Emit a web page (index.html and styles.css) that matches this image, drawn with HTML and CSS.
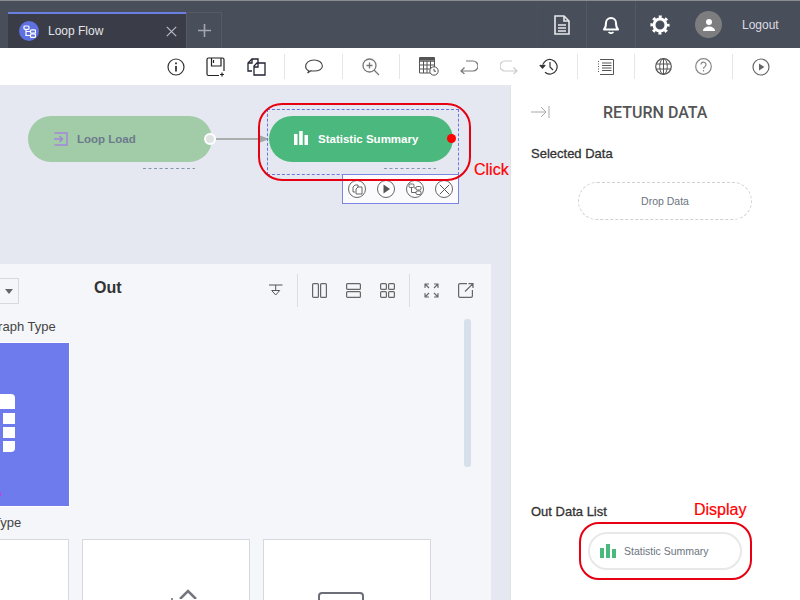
FILE: index.html
```html
<!DOCTYPE html>
<html lang="en">
<head>
<meta charset="utf-8">
<title>Loop Flow</title>
<link rel="stylesheet" href="styles.css">
</head>
<body>
<div class="app">
  <header class="topbar">
    <div class="tabs">
      <div class="tab">
        <span class="tab-logo">
          <svg width="13" height="13" viewBox="0 0 13 13" fill="none" stroke="#fff" stroke-width="1.2"><rect x="1" y="1" width="5" height="3.4" rx="1"/><rect x="7.5" y="4.8" width="5" height="3.4" rx="1"/><rect x="7.5" y="9" width="5" height="3.4" rx="1"/><path d="M3 4.500V10.500H7.500M3 6.500H7.500"/></svg>
        </span>
        <span class="tab-name">Loop Flow</span>
        <svg class="tab-close" width="11" height="11" viewBox="0 0 11 11" stroke="#b9bcc4" stroke-width="1.2"><path d="M.8.8l9.4 9.4M10.2.8L.8 10.2"/></svg>
      </div>
      <div class="tab-add">
        <svg width="13" height="13" viewBox="0 0 13 13" stroke="#a3a6ae" stroke-width="1.6"><path d="M6.5 0v13M0 6.5h13"/></svg>
      </div>
    </div>
    <div class="top-actions">
      <div class="top-btn">
        <svg width="18" height="20" viewBox="0 0 18 20" fill="none" stroke="#e8e8ec" stroke-width="1.6"><path d="M2 1h9l5 5v13H2z"/><path d="M11 1v5h5"/><path d="M5 10h8M5 13h8M5 16h8"/></svg>
      </div>
      <div class="top-btn">
        <svg width="16" height="19" viewBox="0 0 16 19" fill="none" stroke="#fff" stroke-width="2"><path d="M1 14.500c1.500-1.500 2-3 2-6.500a5 5 0 0 1 10 0c0 3.500.5 5 2 6.500z" stroke-linejoin="round"/><path d="M5.500 17.200c1.300 1 3.700 1 5 0" stroke-width="1.700"/></svg>
      </div>
      <div class="top-btn">
        <svg width="20" height="20" viewBox="0 0 20 20" fill="none" stroke="#fff"><circle cx="10" cy="10" r="6" stroke-width="3"/><circle cx="10" cy="10" r="8.200" stroke-width="2.800" stroke-dasharray="3 3.440" stroke-dashoffset="1.500"/></svg>
      </div>
      <span class="avatar">
        <svg width="14" height="14" viewBox="0 0 14 14" fill="#fff"><circle cx="7" cy="4" r="3"/><path d="M1 13c0-3 3-4.500 6-4.500s6 1.500 6 4.500z"/></svg>
      </span>
      <span class="logout">Logout</span>
    </div>
  </header>

  <nav class="toolbar">
    <span class="tool"><svg width="18" height="18" viewBox="0 0 18 18" fill="none" stroke="#333" stroke-width="1.2"><circle cx="9" cy="9" r="8"/><path d="M9 8v5.500" stroke-width="1.800"/><path d="M9 4.500v1.800" stroke-width="1.800"/></svg></span>
    <span class="tool"><svg width="20" height="20" viewBox="0 0 20 20" fill="none" stroke="#222" stroke-width="1.200"><path d="M13 18.500H2.500a1.500 1.500 0 0 1-1.500-1.500V2.500A1.500 1.500 0 0 1 2.500 1h14A1.500 1.500 0 0 1 18 2.500V14"/><path d="M5.500 1v8H15V1M7.500 3v3"/><path d="M16 15.500v4M14 17.500h4"/></svg></span>
    <span class="tool"><svg width="19" height="18" viewBox="0 0 19 18" fill="none" stroke="#223" stroke-width="1.3"><path d="M5 13H1V5l4-4h6v4"/><path d="M1 5h4V1"/><path d="M7 17V8l3-3h8v12z"/><path d="M7 9h4V5"/></svg></span>
    <i class="sep"></i>
    <span class="tool"><svg width="18" height="15" viewBox="0 0 18 15" fill="none" stroke="#444" stroke-width="1.100"><path d="M4 12c-2-1-3.400-2.400-3.400-4.500C.6 4 4 1 9 1s8.400 2.800 8.400 6S14 12 9 12c-1 0-2 0-3-.3L2.500 14z"/></svg></span>
    <i class="sep"></i>
    <span class="tool"><svg width="18" height="18" viewBox="0 0 18 18" fill="none" stroke="#777" stroke-width="1.300"><circle cx="7.500" cy="7.500" r="6.500"/><path d="M12 12l5 5M7.500 4.500v6M4.500 7.500h6"/></svg></span>
    <i class="sep"></i>
    <span class="tool"><svg width="20" height="19" viewBox="0 0 20 19" fill="none" stroke="#555" stroke-width="1"><path d="M.5.500h15v3.500H.5zM.5 4h15v12H.5zM.5 8h15M.5 12h15M4.500 4v12M8 4v12M11.500 4v12"/><path d="M.5 1.500h15M.5 2.500h15"/><circle cx="15" cy="14" r="4.200" fill="#fff"/><path d="M15 11.800v2.400h2"/></svg></span>
    <span class="tool"><svg width="18" height="14" viewBox="0 0 18 14" fill="none" stroke="#777" stroke-width="1.200"><path d="M6 1h7a5 5 0 0 1 0 10H1M4.500 7.500L1 11l3.500 3"/></svg></span>
    <span class="tool"><svg width="18" height="14" viewBox="0 0 18 14" fill="none" stroke="#ccc" stroke-width="1.200"><path d="M12 1H5a5 5 0 0 0 0 10h12M13.500 7.500L17 11l-3.500 3"/></svg></span>
    <span class="tool"><svg width="19" height="17" viewBox="0 0 19 17" fill="none" stroke="#333" stroke-width="1.200"><path d="M3.500 8.500a7.300 7.300 0 1 1 2.500 5.800"/><path d="M.8 7l2.700 3 2.700-3" fill="#333"/><path d="M11 4v5l3 3"/></svg></span>
    <i class="sep"></i>
    <span class="tool"><svg width="16" height="16" viewBox="0 0 16 16" fill="none" stroke="#555" stroke-width="1"><path d="M2 .5h13.500v15H2" /><path d="M4 4h9.500M4 6.500h9.500M4 9h9.500M4 11.500h9.500"/><path d="M.5 2v12" stroke-dasharray="1 1.500"/></svg></span>
    <i class="sep"></i>
    <span class="tool"><svg width="17" height="17" viewBox="0 0 17 17" fill="none" stroke="#555" stroke-width="1"><circle cx="8.500" cy="8.500" r="7.800" stroke-width="1.200"/><ellipse cx="8.500" cy="8.500" rx="3.800" ry="7.800"/><path d="M8.500.7v15.600M1 6h15M1 11h15"/></svg></span>
    <span class="tool"><svg width="17" height="17" viewBox="0 0 17 17" fill="none" stroke="#888" stroke-width="1.200"><circle cx="8.500" cy="8.500" r="7.800"/><path d="M6 6.500a2.500 2.500 0 1 1 3.800 2.200c-.9.500-1.300 1-1.300 2"/><path d="M8.500 12v1.500"/></svg></span>
    <i class="sep"></i>
    <span class="tool"><svg width="18" height="18" viewBox="0 0 18 18" fill="none" stroke="#666" stroke-width="1.200"><circle cx="9" cy="9" r="8"/><path d="M7 5.500l5.500 3.500L7 12.500z" fill="#666" stroke="none"/></svg></span>
  </nav>

  <main class="workspace">
    <section class="canvas">
      <div class="node node-load">
        <svg class="node-icon" width="15" height="14" viewBox="0 0 15 14" fill="none" stroke="#a286dc" stroke-width="1.400"><path d="M1.500 1H14v12H1.500M1 7h8.500M6.500 4l3 3-3 3"/></svg>
        <span>Loop Load</span>
      </div>
      <span class="port"></span>
      <svg class="wire" width="56" height="12" viewBox="0 0 56 12"><path d="M0 6h43" stroke="#949b9a" stroke-width="1.500"/><path d="M43 2l10 4-10 4z" fill="#a0a5a5"/></svg>
      <svg class="dash dash-a" width="52" height="3" viewBox="0 0 52 3"><path d="M0 1.500h52" stroke="#8a96b0" stroke-dasharray="3 2.500"/></svg>

      <div class="node node-stat">
        <svg class="node-icon node-icon-stat" width="14" height="14" viewBox="0 0 14 14" fill="#fff"><path d="M0 3h3.500v11H0zM5.200 0h3.500v14H5.200zM10.500 4H14v10h-3.500z"/></svg>
        <span>Statistic Summary</span>
      </div>
      <span class="port-red"></span>
      <svg class="dash dash-b" width="52" height="3" viewBox="0 0 52 3"><path d="M0 1.500h52" stroke="#8a96b0" stroke-dasharray="3 2.500"/></svg>
      <div class="selection"></div>
      <div class="mini-tools">
        <span class="mini"><svg width="11" height="11" viewBox="0 0 11 11" fill="none" stroke="#555" stroke-width=".9"><path d="M3 8H1V3l2-2h3v2M4 10V5l2-2h4v7z"/></svg></span>
        <span class="mini"><svg width="10" height="10" viewBox="0 0 10 10" fill="#555"><path d="M2.500 .5L9 5l-6.500 4.500z"/></svg></span>
        <span class="mini"><svg width="14" height="12" viewBox="0 0 14 12" fill="none" stroke="#555" stroke-width=".9"><rect x="1" y="1" width="5" height="3.500" rx="1.200"/><rect x="8" y="3.500" width="5" height="3.500" rx="1.200"/><rect x="8" y="8" width="5" height="3.500" rx="1.200"/><path d="M3.500 4.500v5H8M6 5h2"/></svg></span>
        <span class="mini"><svg width="11" height="11" viewBox="0 0 11 11" stroke="#555"><path d="M.8.8l9.400 9.400M10.200.8L.8 10.200"/></svg></span>
      </div>
      <div class="mark mark-click"></div>
      <span class="note note-click">Click</span>

      <div class="out-panel">
        <div class="out-head">
          <div class="select"><i class="caret"></i></div>
          <h2 class="out-title">Out</h2>
          <div class="out-tools">
            <svg width="14" height="13" viewBox="0 0 14 13" fill="none" stroke="#555" stroke-width="1"><path d="M0 1h13.500M6.700 1v5M2.700 6.500h8l-4 4.500z"/></svg>
            <i class="ot-sep"></i>
            <svg width="15" height="15" viewBox="0 0 15 15" fill="none" stroke="#666" stroke-width="1.200"><rect x=".6" y=".6" width="5.800" height="13.800" rx="1"/><rect x="8.600" y=".6" width="5.800" height="13.800" rx="1"/></svg>
            <svg width="15" height="15" viewBox="0 0 15 15" fill="none" stroke="#666" stroke-width="1.200"><rect x=".6" y=".6" width="13.800" height="5.800" rx="1"/><rect x=".6" y="8.600" width="13.800" height="5.800" rx="1"/></svg>
            <svg width="15" height="15" viewBox="0 0 15 15" fill="none" stroke="#666" stroke-width="1.200"><rect x=".6" y=".6" width="5.800" height="5.800" rx="1"/><rect x="8.600" y=".6" width="5.800" height="5.800" rx="1"/><rect x=".6" y="8.600" width="5.800" height="5.800" rx="1"/><rect x="8.600" y="8.600" width="5.800" height="5.800" rx="1"/></svg>
            <i class="ot-sep"></i>
            <svg width="15" height="15" viewBox="0 0 15 15" fill="none" stroke="#666" stroke-width="1.100"><path d="M1 5V1h4M1 1l4 4M10 1h4v4M14 1l-4 4M1 10v4h4M1 14l4-4M10 14h4v-4M14 14l-4-4"/></svg>
            <svg width="16" height="15" viewBox="0 0 16 15" fill="none" stroke="#666" stroke-width="1.200"><path d="M9 .6H2a1.400 1.400 0 0 0-1.400 1.400v11A1.400 1.400 0 0 0 2 14.400h11a1.400 1.400 0 0 0 1.400-1.400V7M7 8.500L15 .6M10.500.6H15v4.500"/></svg>
          </div>
        </div>
        <div class="label label-graph">Graph Type</div>
        <div class="graph-card">
          <div class="table-glyph">
            <i class="tg-head"></i><i class="tg-cell"></i><i class="tg-cell"></i><i class="tg-cell tg-last"></i>
          </div>
          <i class="graph-dot"></i>
        </div>
        <div class="label label-type">Type</div>
        <div class="type-row">
          <div class="type-card"></div>
          <div class="type-card">
            <i class="glyph-tick"></i>
            <svg class="glyph-up" width="30" height="10" viewBox="0 0 30 10" fill="none" stroke="#75777f" stroke-width="2.600"><path d="M7 10L15 2l8 8"/></svg>
          </div>
          <div class="type-card">
            <div class="glyph-box"></div>
          </div>
        </div>
        <div class="scroll-thumb"></div>
      </div>
    </section>

    <aside class="side">
      <div class="side-head">
        <svg width="19" height="12" viewBox="0 0 19 12" fill="none" stroke="#aaa" stroke-width="1"><path d="M0 6h15M10 1l5 5-5 5M18 0v12"/></svg>
        <h1 class="side-title">RETURN DATA</h1>
      </div>
      <div class="side-label">Selected Data</div>
      <div class="drop">Drop Data</div>
      <div class="out-list">
        <div class="side-label">Out Data List</div>
        <div class="pill">
          <svg width="16" height="14" viewBox="0 0 16 14" fill="#4bb87e"><path d="M0 4h4v10H0zM6 0h4v14H6zM12 5h4v9h-4z"/></svg>
          <span>Statistic Summary</span>
        </div>
        <span class="note note-display">Display</span>
        <div class="mark mark-display"></div>
      </div>
    </aside>
  </main>
</div>
</body>
</html>
```
FILE: styles.css
```css
* { box-sizing: border-box; }
html, body { margin: 0; height: 100%; overflow: hidden; }
body { font-family: "Liberation Sans", Arial, sans-serif; font-size: 12px; color: #333; }
.app { width: 800px; height: 600px; display: flex; flex-direction: column; overflow: hidden; }

.topbar { height: 48px; flex: none; background: #494e5b; border-top: 1px solid #8a8c92; display: flex; justify-content: space-between; padding-left: 8px; }
.tabs { display: flex; align-self: flex-end; height: 36px; }
.tab { width: 178px; background: #3a3d47; border-top: 2px solid #6a7fe0; display: flex; align-items: center; padding: 0 8px 0 11px; }
.tab-logo { width: 20px; height: 20px; border-radius: 50%; background: #5f71e0; display: flex; align-items: center; justify-content: center; }
.tab-name { margin-left: 9px; font-size: 12px; color: #e4e5ea; flex: 1; }
.tab-close { margin-right: 1px; }
.tab-add { width: 36px; border: 1px solid #555a66; border-bottom: 0; display: flex; align-items: center; justify-content: center; }
.top-actions { display: flex; align-items: center; }
.top-btn { width: 49px; height: 47px; display: flex; align-items: center; justify-content: center; border-left: 1px solid #52566350; }
.top-btn + .top-btn { border-left-color: #545864; }
.avatar { width: 27px; height: 27px; border-radius: 50%; background: #7d7d80; display: flex; align-items: center; justify-content: center; margin-left: 11px; }
.logout { font-size: 12px; color: #dcdde2; margin: 0 22px 0 20px; width: 36px; white-space: nowrap; }

.toolbar { height: 37px; flex: none; background: #fff; display: flex; align-items: center; padding-left: 156px; }
.tool { width: 40px; display: flex; justify-content: center; align-items: center; }
.sep { width: 1px; height: 25px; margin: 0 8.25px; background: #e4e6ea; }

.workspace { flex: 1; display: flex; min-height: 0; }
.canvas { position: relative; width: 510px; background: #e5e8f0; overflow: hidden; padding-top: 179px; }

.node { position: absolute; top: 31px; width: 184px; height: 46px; border-radius: 23px; display: flex; align-items: center; font-weight: 700; font-size: 11.5px; padding-left: 25px; }
.node-load { left: 28px; background: #a2cba8; color: #6c7a8c; }
.node-stat { left: 269px; background: #4bb87e; color: #fff; }
.node-icon { margin-right: 9px; flex: none; }
.node-icon-stat { margin-top: -3px; margin-right: 10px; }
.port { position: absolute; left: 204px; top: 48px; width: 12px; height: 12px; border-radius: 50%; background: #dfe4e2; border: 2px solid #fff; }
.port-red { position: absolute; left: 447px; top: 49px; width: 9px; height: 9px; border-radius: 50%; background: #f00; }
.wire { position: absolute; left: 216px; top: 48px; }
.dash { position: absolute; top: 82px; }
.dash-a { left: 143px; }
.dash-b { left: 384px; }
.selection { position: absolute; left: 267px; top: 24px; width: 192px; height: 66px; border: 1px dashed #6a74e0; }
.mini-tools { position: absolute; left: 342px; top: 89px; width: 117px; height: 30px; background: #fbfbfd; border: 1px solid #7a86e4; display: flex; align-items: center; justify-content: space-between; padding: 0 5px; }
.mini { width: 18px; height: 18px; border-radius: 50%; border: 1px solid #666; background: #fff; display: flex; align-items: center; justify-content: center; }
.mark { position: absolute; border: 2px solid #e60012; }
.mark-click { left: 258px; top: 18px; width: 213px; height: 78px; border-radius: 24px; }
.note { position: absolute; color: #f00; font-size: 16px; -webkit-text-stroke: .2px #f00; }
.note-click { left: 474px; top: 76px; }

.out-panel { position: relative; margin-left: -130px; width: 621px; height: 336px; background: #f4f6f9; }
.out-head { display: flex; height: 58px; align-items: flex-start; padding-top: 14px; }
.select { width: 149px; height: 26px; border: 1px solid #d8d9dc; background: #f4f6f9; position: relative; }
.caret { position: absolute; right: 5px; top: 10px; border: 4px solid transparent; border-top: 5px solid #666; border-bottom: 0; }
.out-title { margin: 0 0 0 75px; font-size: 16px; font-weight: 700; color: #333; line-height: 20px; width: 27px; }
.out-tools { display: flex; align-items: center; margin-left: 148px; height: 25px; gap: 19px; }
.ot-sep { width: 1px; height: 33px; background: #d9dde6; margin: 0 -5px; flex: none; }
.label { font-size: 13px; color: #444; line-height: 16px; }
.label-graph { padding-left: 118px; margin-top: -3px; }
.graph-card { width: 200px; height: 165px; margin-top: 7px; background: #6d7bed; border: 1px solid #fff; border-left: 0; position: relative; }
.table-glyph { position: absolute; left: 0; top: 51px; width: 145px; display: flex; flex-direction: column; align-items: flex-end; gap: 3px; }
.tg-head { display: block; width: 30px; height: 16px; background: #fff; border-bottom: 1px solid #6d7bed; border-radius: 0 4px 0 0; }
.tg-cell { display: block; width: 12px; height: 11px; background: #fff; }
.tg-last { border-radius: 0 0 4px 0; }
.graph-dot { position: absolute; left: 130px; top: 149px; width: 1px; height: 4px; background: #c83fd8; }
.label-type { padding-left: 123px; margin-top: 8px; }
.type-row { display: flex; gap: 13px; margin-top: 8px; padding-left: 31px; }
.type-card { width: 168px; height: 120px; background: #fff; border: 1px solid #d6d7df; flex: none; position: relative; }
.glyph-up { position: absolute; left: 90px; top: 49px; }
.glyph-tick { position: absolute; left: 88px; top: 58px; width: 2px; height: 2px; background: #8a8c94; }
.glyph-box { position: absolute; left: 54px; top: 52px; width: 46px; height: 30px; border: 2px solid #6d6f78; border-radius: 4px; }
.scroll-thumb { position: absolute; left: 594px; top: 55px; width: 7px; height: 148px; border-radius: 3px; background: #d5e0ea; }

.side { width: 290px; flex: none; background: #fff; border-left: 1px solid #e3e3e3; display: flex; flex-direction: column; padding-left: 20px; position: relative; }
.side-head { display: flex; align-items: center; height: 54px; }
.side-title { margin: 0 0 0 53px; font-family: Roboto, "Liberation Sans", sans-serif; font-size: 16px; font-weight: 500; color: #555; }
.side-label { font-size: 13px; color: #333; -webkit-text-stroke: .3px #333; line-height: 16px; margin-top: 7px; }
.drop { width: 174px; height: 38px; margin: 20px 0 0 47px; border: 1px dashed #d0d0d0; border-radius: 19px; display: flex; align-items: center; justify-content: center; font-size: 10.5px; color: #6b7480; }
.out-list { margin-top: auto; position: relative; height: 102px; }
.out-list .side-label { margin-top: 6px; }
.pill { width: 154px; height: 38px; margin: 12px 0 0 57px; border: 2px solid #e8e8e8; border-radius: 19px; display: flex; align-items: center; padding-left: 10px; gap: 8px; font-size: 10.5px; color: #6b7480; }
.mark-display { left: 48px; top: 24px; width: 173px; height: 58px; border-radius: 20px; }
.note-display { left: 163px; top: 3px; }
```
